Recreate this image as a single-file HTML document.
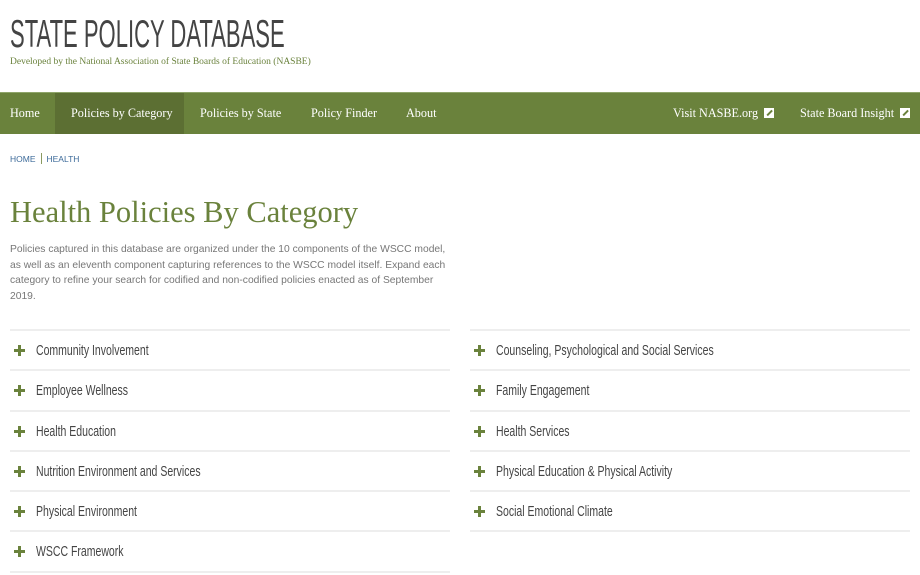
<!DOCTYPE html>
<html><head><style>
*{margin:0;padding:0;box-sizing:border-box}
body{width:920px;height:575px;background:#fff;position:relative;overflow:hidden;font-family:"Liberation Sans",sans-serif}
.abs{position:absolute;white-space:nowrap}
.title{left:10px;top:13px;font-size:39px;color:#444;transform:scaleX(.565);transform-origin:left top}
.sub{left:10px;top:57px;font-family:"Liberation Serif",serif;font-size:9.5px;color:#6a823c}
.nav{left:0;top:92px;width:920px;height:42px;background:#6a823c;border-top:1px solid #8fa56a}
.nav a{position:absolute;top:0;height:41px;line-height:41px;font-family:"Liberation Serif",serif;font-size:12.2px;color:#fff;text-decoration:none;white-space:nowrap}
.ext{display:inline-block;width:10px;height:10px;background:#fff;margin-left:6px;vertical-align:-1px;position:relative}
.ext:after{content:"";position:absolute;left:2px;top:4px;width:7px;height:1.6px;background:#6a823c;transform:rotate(-45deg)}
.bc{left:10px;top:153px;font-size:8.5px;color:#3d6b9a}
.bc span{display:inline-block;width:1px;height:11px;background:#8a9a60;margin:0 5px;vertical-align:-2px}
h1{position:absolute;left:10px;top:195px;font-family:"Liberation Serif",serif;font-weight:normal;font-size:30.5px;color:#6a823c;white-space:nowrap}
.p{left:10px;top:242px;font-size:10.5px;line-height:15.5px;color:#777;transform:scaleX(.98);transform-origin:left top}
.col{position:absolute;top:329px;width:440px;border-top:2px solid #eee}
.row{height:40.3px;border-bottom:2px solid #eee;position:relative}
.row .pl{position:absolute;left:4px;top:14px;width:11px;height:11px}
.pl:before{content:"";position:absolute;left:0;top:4px;width:11px;height:3px;background:#6a823c}
.pl:after{content:"";position:absolute;left:4px;top:0;width:3px;height:11px;background:#6a823c}
.row .t{position:absolute;left:26px;top:11px;font-size:15px;color:#444;transform:scaleX(.7);transform-origin:left top;white-space:nowrap}
</style></head><body>
<div class="abs title">STATE POLICY DATABASE</div>
<div class="abs sub">Developed by the National Association of State Boards of Education (NASBE)</div>
<div class="abs nav">
<a style="left:10px">Home</a>
<a style="left:55px;width:129px;background:#5c6f33;padding-left:16px">Policies by Category</a>
<a style="left:200px">Policies by State</a>
<a style="left:311px">Policy Finder</a>
<a style="left:406px">About</a>
<a style="left:673px">Visit NASBE.org<i class="ext"></i></a>
<a style="left:800px">State Board Insight<i class="ext"></i></a>
</div>
<div class="abs bc">HOME<span></span>HEALTH</div>
<h1>Health Policies By Category</h1>
<div class="abs p">Policies captured in this database are organized under the 10 components of the WSCC model,<br>as well as an eleventh component capturing references to the WSCC model itself. Expand each<br>category to refine your search for codified and non-codified policies enacted as of September<br>2019.</div>
<div class="col" style="left:10px">
<div class="row"><i class="pl"></i><span class="t">Community Involvement</span></div>
<div class="row"><i class="pl"></i><span class="t">Employee Wellness</span></div>
<div class="row"><i class="pl"></i><span class="t">Health Education</span></div>
<div class="row"><i class="pl"></i><span class="t">Nutrition Environment and Services</span></div>
<div class="row"><i class="pl"></i><span class="t">Physical Environment</span></div>
<div class="row"><i class="pl"></i><span class="t">WSCC Framework</span></div>
</div>
<div class="col" style="left:470px">
<div class="row"><i class="pl"></i><span class="t">Counseling, Psychological and Social Services</span></div>
<div class="row"><i class="pl"></i><span class="t">Family Engagement</span></div>
<div class="row"><i class="pl"></i><span class="t">Health Services</span></div>
<div class="row"><i class="pl"></i><span class="t">Physical Education &amp; Physical Activity</span></div>
<div class="row"><i class="pl"></i><span class="t">Social Emotional Climate</span></div>
</div>
</body></html>
